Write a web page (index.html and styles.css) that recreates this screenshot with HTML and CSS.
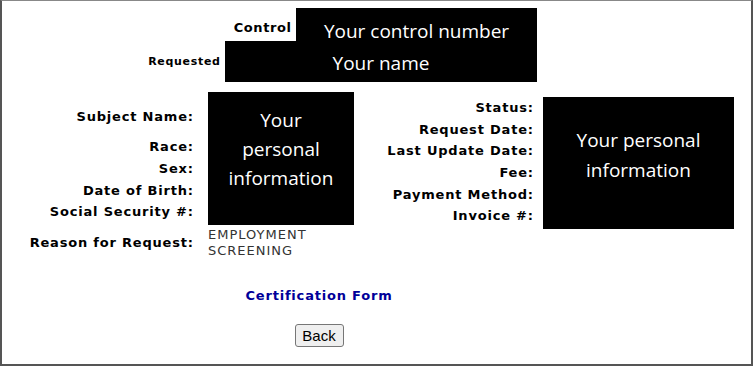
FILE: index.html
```html
<!DOCTYPE html>
<html lang="en">
<head>
<meta charset="utf-8">
<title>Request Details</title>
<link rel="stylesheet" href="styles.css">
</head>
<body>
<div class="frame">
  <div class="header">
    <div class="head-row">
      <span class="head-label">Control</span>
      <div class="mask mask-control">Your control number</div>
    </div>
    <div class="head-row">
      <span class="head-label small">Requested</span>
      <div class="mask mask-name">Your name</div>
    </div>
  </div>

  <div class="main">
    <div class="left">
      <div class="lbl lbl-subject">Subject Name:</div>
      <div class="mask mask-left">Your<br>personal<br>information</div>
      <div class="lbl">Race:</div>
      <div class="lbl">Sex:</div>
      <div class="lbl">Date of Birth:</div>
      <div class="lbl">Social Security #:</div>
      <div class="lbl lbl-reason">Reason for Request:</div>
      <div class="value">EMPLOYMENT<br>SCREENING</div>
    </div>

    <div class="right">
      <div class="right-labels">
        <div class="lbl">Status:</div>
        <div class="lbl">Request Date:</div>
        <div class="lbl">Last Update Date:</div>
        <div class="lbl">Fee:</div>
        <div class="lbl">Payment Method:</div>
        <div class="lbl">Invoice #:</div>
      </div>
      <div class="mask mask-right">Your personal<br>information</div>
    </div>
  </div>

  <div class="footer">
    <a class="cert-link" href="#">Certification Form</a>
    <button class="back-btn" type="button">Back</button>
  </div>
</div>
</body>
</html>
```

FILE: styles.css
```css
html, body {
  margin: 0;
  padding: 0;
  background: #fff;
}

.frame {
  box-sizing: border-box;
  width: 753px;
  height: 366px;
  border: 2px solid #555;
  border-top: 1px solid #888;
  font-family: "DejaVu Sans", Verdana, sans-serif;
  font-size: 13px;
  color: #000;
  overflow: hidden;
}

/* ---------- header ---------- */
.header {
  width: 535px;
  margin-top: 7px;
  display: flex;
  flex-direction: column;
  align-items: flex-end;
}

.head-row {
  display: flex;
  align-items: center;
  gap: 5px;
}

.head-label {
  font-weight: bold;
  font-size: 13px;
  letter-spacing: 0.6px;
  margin-right: -0.6px;
  padding-top: 5px;
}

.head-label.small {
  font-size: 11px;
  letter-spacing: 0.7px;
  margin-right: -0.7px;
  padding-top: 0;
}

.mask {
  background: #000;
  color: #fff;
  font-family: "Open Sans", "Noto Sans", sans-serif;
  font-size: 19px;
  text-align: center;
  box-sizing: border-box;
}

.mask-control {
  width: 241px;
  height: 33px;
  padding-top: 13px;
  line-height: 20px;
  white-space: nowrap;
}

.mask-name {
  width: 312px;
  height: 41px;
  padding-top: 12px;
  line-height: 20px;
}

/* ---------- main ---------- */
.main {
  display: flex;
  align-items: flex-start;
  margin-top: 10px;
}

.left {
  display: grid;
  grid-template-columns: 191px 146px;
  grid-template-rows: 44px 22px 21.67px 21.67px 23.66px auto;
  column-gap: 15px;
}

.lbl {
  font-weight: bold;
  text-align: right;
  line-height: 21.67px;
  letter-spacing: 0.8px;
  margin-right: -0.8px;
  white-space: nowrap;
}

.left .lbl {
  grid-column: 1;
  align-self: start;
}

.lbl-subject {
  padding-top: 14px;
}

.left .lbl-reason {
  align-self: center;
  line-height: 16px;
  padding-top: 2px;
}

.mask-left {
  grid-column: 2;
  grid-row: 1 / span 5;
  height: 133px;
  padding-top: 14px;
  line-height: 29px;
}

.value {
  grid-column: 2;
  grid-row: 6;
  color: #333;
  letter-spacing: 1px;
  line-height: 16.5px;
  padding-top: 2px;
}

.right {
  display: grid;
  grid-template-columns: 179px 191px;
  column-gap: 10px;
  margin-top: 5px;
}

.right-labels {
  display: flex;
  flex-direction: column;
}

.mask-right {
  height: 132px;
  padding-top: 28px;
  line-height: 30px;
}

/* ---------- footer ---------- */
.footer {
  width: 634px;
  margin-top: 28px;
  display: flex;
  flex-direction: column;
  align-items: center;
  gap: 20px;
}

.cert-link {
  font-weight: bold;
  color: #000099;
  text-decoration: none;
  letter-spacing: 0.8px;
  line-height: 16px;
}

.back-btn {
  box-sizing: border-box;
  width: 49px;
  height: 23px;
  padding: 0;
  font-family: "Liberation Sans", Arial, sans-serif;
  font-size: 15px;
  color: #000;
  background: #efefef;
  border: 1px solid #767676;
  border-radius: 3px;
}
```
